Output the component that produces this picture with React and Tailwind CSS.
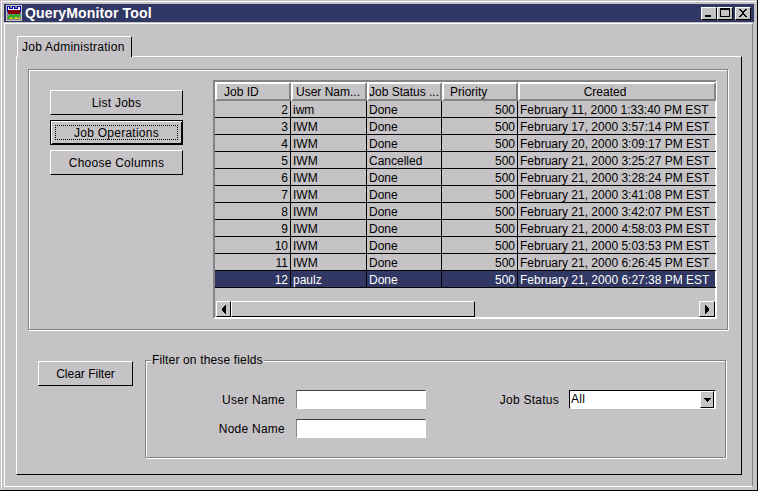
const jobs = [
  [2, 'iwm', 'Done', 'February 11, 2000 1:33:40 PM EST'],
  [3, 'IWM', 'Done', 'February 17, 2000 3:57:14 PM EST'],
  [4, 'IWM', 'Done', 'February 20, 2000 3:09:17 PM EST'],
  [5, 'IWM', 'Cancelled', 'February 21, 2000 3:25:27 PM EST'],
  [6, 'IWM', 'Done', 'February 21, 2000 3:28:24 PM EST'],
  [7, 'IWM', 'Done', 'February 21, 2000 3:41:08 PM EST'],
  [8, 'IWM', 'Done', 'February 21, 2000 3:42:07 PM EST'],
  [9, 'IWM', 'Done', 'February 21, 2000 4:58:03 PM EST'],
  [10, 'IWM', 'Done', 'February 21, 2000 5:03:53 PM EST'],
  [11, 'IWM', 'Done', 'February 21, 2000 6:26:45 PM EST'],
  [12, 'paulz', 'Done', 'February 21, 2000 6:27:38 PM EST'],
];

const columns = 'grid grid-cols-[76px_76px_75px_76px_198px]';
const bevel = 'border border-t-white border-l-white border-r-black border-b-black';
const etched = 'border border-[#848284] shadow-[inset_1px_1px_0_#fff,1px_1px_0_#fff]';

function HeaderCell({ children, className = '' }) {
  return (
    <div className={`h-[19px] border-2 border-t-white border-l-white border-r-[#848284] border-b-[#848284] leading-[16px] whitespace-nowrap overflow-hidden ${className}`}>
      {children}
    </div>
  );
}

function Cell({ children, className = '', last }) {
  return (
    <div className={`h-[17px] leading-[18px] border-b border-black whitespace-nowrap overflow-hidden ${last ? '' : 'border-r'} ${className}`}>
      {children}
    </div>
  );
}

function ActionButton({ children, focused, className = '' }) {
  if (focused) {
    return (
      <button className={`h-[25px] tracking-[0.25px] border border-black shadow-[inset_1px_1px_0_#fff,inset_-1px_-1px_0_#000] p-1 ${className}`}>
        <span className="flex h-full items-center justify-center border border-dotted border-black">{children}</span>
      </button>
    );
  }
  return <button className={`h-[25px] tracking-[0.25px] ${bevel} ${className}`}>{children}</button>;
}

function WinButton({ children, className = '' }) {
  return (
    <div className={`flex h-[13px] w-[16px] items-center justify-center bg-[#c6c3c6] border border-t-white border-l-white border-r-black border-b-black ${className}`}>
      <svg width="12" height="10" viewBox="0 0 12 10" shapeRendering="crispEdges">{children}</svg>
    </div>
  );
}

function Arrow({ d }) {
  return (
    <svg width="8" height="9" viewBox="0 0 8 9" shapeRendering="crispEdges">
      <path d={d} fill="#000" />
    </svg>
  );
}

export default function App() {
  return (
    <div className="h-[491px] w-[758px] overflow-hidden border-r border-b border-black bg-[#c6c3c6] p-[1px] font-['Liberation_Sans',Arial,sans-serif] text-[12px] text-black">
      <div className="h-full border-t border-l border-white pt-[2px] pl-[2px] pr-[2px]">
        {/* Title bar */}
        <div className="flex h-[18px] w-[750px] items-center bg-[#313863] pl-[2px] pr-[3px]">
          <svg width="16" height="16" viewBox="0 0 16 16" shapeRendering="crispEdges" className="shrink-0">
            <rect width="16" height="16" fill="#c6c3c6" />
            <rect x="1" y="1" width="14" height="14" fill="#848284" />
            <path d="M1 1h3v2h2V1h3v2h2V1h4v6H1z" fill="#0000c0" />
            <path d="M2 2h1v2h4V2h1v2h4V2h2v3H2z" fill="#fff" />
            <rect x="2" y="5" width="12" height="4" fill="#840000" />
            <rect x="2" y="9" width="12" height="5" fill="#848284" />
            <path d="M2 12l3-3 2 2 3-2 2 1 2-2v2l-2 2-2-1-3 2-2-2-3 3z" fill="#00c000" />
            <path d="M2 14l3-2 2 2 3-2 2 1 2-1v2H2z" fill="#c6c300" />
          </svg>
          <span className="ml-[3px] text-[14px] font-bold leading-[18px] tracking-[0.15px] text-white">QueryMonitor Tool</span>
          <div className="ml-auto flex items-center">
            <WinButton><rect x="2" y="7" width="6" height="2" fill="#000" /></WinButton>
            <WinButton><path d="M1 0h10v9H1zM2 2v6h8V2z" fill="#000" fillRule="evenodd" /></WinButton>
            <WinButton className="ml-[2px]"><path d="M2 1h2v1h1v1h2V2h1V1h2v1H9v1H8v1H7v2h1v1h1v1h1v1H8V8H7V7H5v1H4v1H2V8h1V7h1V6h1V4H4V3H3V2H2z" fill="#000" /></WinButton>
          </div>
        </div>

        {/* Client area */}
        <div className="mt-[1px] h-[464px] w-[749px] border border-t-white border-l-white border-r-[#848284] border-b-white pt-[12px] pl-[11px]">
          <div className="relative z-10 -mb-px ml-[1px] flex h-[21px] w-[115px] items-center rounded-tl-[2px] rounded-tr-[2px] border-t border-l border-r border-t-white border-l-white border-r-black bg-[#c6c3c6] pl-[4px] tracking-[0.25px]">
            Job Administration
          </div>
          <div className="h-[419px] w-[726px] border border-t-white border-l-white border-r-black border-b-black pt-[12px] pl-[11px]">
            {/* Jobs panel */}
            <div className={`flex h-[261px] w-[700px] ${etched} pt-[10px] pl-[21px]`}>
              <div className="flex w-[133px] shrink-0 flex-col gap-[5px] pt-[10px]">
                <ActionButton>List Jobs</ActionButton>
                <ActionButton focused>Job Operations</ActionButton>
                <ActionButton>Choose Columns</ActionButton>
              </div>

              {/* Table */}
              <div className="ml-[30px] h-[239px] w-[504px] border-2 border-t-[#848284] border-l-[#848284] border-r-white border-b-white">
                <div className={columns}>
                  <HeaderCell className="pl-[7px]">Job ID</HeaderCell>
                  <HeaderCell className="pl-[3px]">User Nam...</HeaderCell>
                  <HeaderCell>Job Status ...</HeaderCell>
                  <HeaderCell className="pl-[6px]">Priority</HeaderCell>
                  <HeaderCell className="pr-[24px] text-center">Created</HeaderCell>
                </div>
                {jobs.map(([id, user, status, created], i) => (
                  <div key={id} className={`${columns} ${i === jobs.length - 1 ? 'bg-[#313863] text-white' : ''}`}>
                    <Cell className="pr-[2px] text-right">{id}</Cell>
                    <Cell className="pl-[2px]">{user}</Cell>
                    <Cell className="pl-[2px]">{status}</Cell>
                    <Cell className="pr-[2px] text-right">500</Cell>
                    <Cell className="pl-[2px]" last>{created}</Cell>
                  </div>
                ))}
                {/* Scrollbar */}
                <div className="mt-[13px] flex h-[16px] w-[500px] pl-[1px]">
                  <div className={`flex w-[15px] items-center justify-center ${bevel}`}>
                    <Arrow d="M5 0h1v9H5V8H4V7H3V6H2V3h1V2h1V1h1z" />
                  </div>
                  <div className={`w-[244px] ${bevel}`} />
                  <div className={`ml-auto flex w-[16px] items-center justify-center ${bevel}`}>
                    <Arrow d="M2 0h1v1h1v1h1v1h1v3H5v1H4v1H3v1H2z" />
                  </div>
                </div>
              </div>
            </div>

            {/* Filter */}
            <div className="flex pt-[14px] pl-[10px]">
              <button className={`mt-[17px] h-[25px] w-[95px] shrink-0 ${bevel}`}>Clear Filter</button>
              <fieldset className={`ml-[12px] mt-[9px] h-[105px] w-[581px] ${etched}`}>
                <legend className="ml-[5px] bg-[#c6c3c6] px-[1px] leading-[14px] tracking-[0.15px]">Filter on these fields</legend>
                <div className="grid grid-cols-[150px_131px_142px_147px] items-center gap-y-[10px] pt-[23px] tracking-[0.25px]">
                  <label className="pr-[11px] text-right">User Name</label>
                  <input className="h-[19px] w-[130px] border border-t-[#424142] border-l-[#848284] border-r-white border-b-white bg-white" />
                  <label className="pr-[10px] text-right">Job Status</label>
                  <div className="flex h-[19px] items-stretch border border-t-black border-l-black border-r-white border-b-white bg-white pl-[1px]">
                    <span className="flex-1 leading-[17px]">All</span>
                    <div className={`mr-[1px] flex w-[14px] items-center justify-center bg-[#c6c3c6] ${bevel}`}>
                      <svg width="7" height="4" viewBox="0 0 7 4" shapeRendering="crispEdges"><path d="M0 0h7v1H6v1H5v1H4v1H3V3H2V2H1V1H0z" fill="#000" /></svg>
                    </div>
                  </div>
                  <label className="pr-[11px] text-right">Node Name</label>
                  <input className="h-[19px] w-[130px] border border-t-[#424142] border-l-[#848284] border-r-white border-b-white bg-white" />
                </div>
              </fieldset>
            </div>
          </div>
        </div>
      </div>
    </div>
  );
}
